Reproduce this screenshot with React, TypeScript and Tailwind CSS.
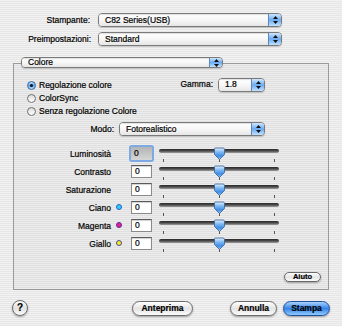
import React from "react";

const Arrows = () => (
  <svg width="5" height="8" viewBox="0 0 5 8">
    <path d="M2.5 0 L5 3 L0 3 Z M0 5 L5 5 L2.5 8 Z" fill="#111" />
  </svg>
);

function Popup({ className, text }: { className: string; text: string }) {
  return (
    <div
      className={`flex overflow-hidden rounded-[4px] border border-[#7a7a7a] shadow-[0_1px_1px_rgba(0,0,0,0.18)] ${className}`}
    >
      <div className="flex flex-1 items-center bg-linear-to-b from-[#ffffff] via-[#f7f7f7] to-[#e6e6e6] pl-[6px] shadow-[inset_0_1px_1px_rgba(0,0,0,0.12)]">
        {text}
      </div>
      <div className="flex w-[13px] items-center justify-center border-l border-[#5f87b8] bg-linear-to-b from-[#cfe7fd] via-[#6aaaf0] to-[#bfe2ff]">
        <Arrows />
      </div>
    </div>
  );
}

function Radio({ on }: { on?: boolean }) {
  if (on)
    return (
      <div className="flex h-[9px] w-[9px] items-center justify-center rounded-full border border-[#3a6a9e] bg-linear-to-b from-[#bfe0fd] via-[#5ea2ec] to-[#b8e0ff]">
        <div className="h-[3px] w-[3px] rounded-full bg-[#111]" />
      </div>
    );
  return (
    <div className="h-[9px] w-[9px] rounded-full border border-[#6e6e6e] bg-linear-to-b from-[#dcdcdc] to-[#ffffff] shadow-[0_1px_0_rgba(255,255,255,0.6)]" />
  );
}

function Slider() {
  return (
    <svg width="124" height="18" viewBox="0 0 124 18">
      <defs>
        <linearGradient id="trk" x1="0" y1="0" x2="0" y2="1">
          <stop offset="0" stopColor="#262626" />
          <stop offset="0.5" stopColor="#4e4e4e" />
          <stop offset="1" stopColor="#a0a0a0" />
        </linearGradient>
        <linearGradient id="thm" x1="0" y1="0" x2="0" y2="1">
          <stop offset="0" stopColor="#e4f2ff" />
          <stop offset="0.35" stopColor="#7db9f3" />
          <stop offset="0.7" stopColor="#3f8ae2" />
          <stop offset="1" stopColor="#9ad0ff" />
        </linearGradient>
      </defs>
      <rect x="0" y="4" width="120" height="4" rx="2" fill="url(#trk)" />
      <rect x="4" y="14" width="1" height="3" fill="#555" />
      <rect x="115" y="14" width="1" height="3" fill="#555" />
      <rect x="60" y="14" width="1" height="3" fill="#555" />
      <path
        d="M56 3 H64 Q65.5 3 65.5 4.5 V9.5 L60.5 14.5 L55.5 9.5 V4.5 Q55.5 3 56 3 Z"
        fill="url(#thm)"
        stroke="#34609a"
        strokeWidth="0.8"
      />
    </svg>
  );
}

function Dot({ color }: { color: string }) {
  return <div className={`h-[6px] w-[6px] rounded-full border ${color}`} />;
}

function SliderRow({
  label,
  dot,
  focused,
}: {
  label: string;
  dot?: string;
  focused?: boolean;
}) {
  return (
    <div className="flex h-[18px] items-start">
      <div className="mt-[5px] w-[97px] text-right">{label}</div>
      <div className="flex w-[20px] items-start pl-[5px] pt-[5px]">
        {dot && <Dot color={dot} />}
      </div>
      <div
        className={
          focused
            ? "mt-[2px] flex h-[13px] w-[21px] items-center rounded-[1px] bg-linear-to-b from-[#b4b4b4] to-[#d6d6d6] pl-[3px] shadow-[0_0_0_2px_#7eaae4]"
            : "mt-[2px] flex h-[13px] w-[21px] items-center border border-[#8a8a8a] border-t-[#5a5a5a] bg-white pl-[3px] shadow-[inset_0_1px_1px_rgba(0,0,0,0.18)]"
        }
      >
        0
      </div>
      <div className="ml-[7px]">
        <Slider />
      </div>
    </div>
  );
}

function Button({
  children,
  className,
  primary,
}: {
  children: React.ReactNode;
  className: string;
  primary?: boolean;
}) {
  return (
    <div
      className={
        (primary
          ? "border-[#1d4f9c] bg-linear-to-b from-[#a8d2fb] via-[#3583e6] to-[#8fcbff] "
          : "border-[#6a6a6a] bg-linear-to-b from-[#ffffff] via-[#e4e4e4] to-[#fbfbfb] ") +
        "flex items-center justify-center rounded-full border font-bold shadow-[0_1px_2px_rgba(0,0,0,0.35)] " +
        className
      }
    >
      {children}
    </div>
  );
}

export default function App() {
  return (
    <div className="flex h-[326px] w-[342px] flex-col overflow-hidden bg-[repeating-linear-gradient(180deg,#f2f2f2_0px,#f2f2f2_1px,#e6e6e6_1px,#e6e6e6_2px)] pt-[13px] font-['Liberation_Sans',Arial,sans-serif] text-[8.5px] leading-none text-black [-webkit-text-stroke:0.2px_#000]">
      <div className="flex h-[14px] items-center">
        <div className="w-[90px] text-right">Stampante:</div>
        <Popup className="ml-[8px] h-[14px] w-[184px]" text="C82 Series(USB)" />
      </div>
      <div className="mt-[5px] flex h-[14px] items-center">
        <div className="w-[91px] text-right">Preimpostazioni:</div>
        <Popup className="ml-[7px] h-[14px] w-[184px]" text="Standard" />
      </div>
      <Popup
        className="relative z-10 ml-[21px] mt-[11px] h-[11px] w-[202px]"
        text="Colore"
      />
      <div className="mx-[13px] -mt-[5px] flex h-[227px] flex-col border border-[#9a9a9a] bg-black/[0.025] pb-[7px] pt-[15px]">
        <div className="flex h-[13px] items-center">
          <div className="ml-[13px] flex items-center gap-[3px]">
            <Radio on />
            <span>Regolazione colore</span>
          </div>
          <div className="ml-auto mr-[63px] -mt-[2px] flex items-center">
            <span>Gamma:</span>
            <Popup className="ml-[5px] h-[14px] w-[47px]" text="1.8" />
          </div>
        </div>
        <div className="flex h-[13px] items-center">
          <div className="ml-[13px] flex items-center gap-[3px]">
            <Radio />
            <span>ColorSync</span>
          </div>
        </div>
        <div className="flex h-[13px] items-center">
          <div className="ml-[13px] flex items-center gap-[3px]">
            <Radio />
            <span>Senza regolazione Colore</span>
          </div>
        </div>
        <div className="mt-[4px] flex h-[14px] items-center justify-end pr-[63px]">
          <span>Modo:</span>
          <Popup className="ml-[5px] h-[14px] w-[146px]" text="Fotorealistico" />
        </div>
        <div className="mt-[9px] flex flex-col">
          <SliderRow label="Luminosità" focused />
          <SliderRow label="Contrasto" />
          <SliderRow label="Saturazione" />
          <SliderRow label="Ciano" dot="border-[#2a5fc8] bg-[#2ad0fa]" />
          <SliderRow label="Magenta" dot="border-[#5a2a9a] bg-[#ec1e90]" />
          <SliderRow label="Giallo" dot="border-[#4a4aa0] bg-[#f6ee18]" />
        </div>
        <div className="mt-auto flex justify-end pr-[7px]">
          <Button className="h-[10px] w-[37px] text-[7.5px]">Aiuto</Button>
        </div>
      </div>
      <div className="mt-[10px] flex h-[16px] items-center">
        <div className="ml-[12px] flex h-[16px] w-[16px] items-center justify-center rounded-full border border-[#6a6a6a] bg-linear-to-b from-[#ffffff] via-[#e2e2e2] to-[#fafafa] text-[10px] font-bold shadow-[0_1px_2px_rgba(0,0,0,0.35)]">
          ?
        </div>
        <Button className="ml-[104px] h-[15px] w-[61px] text-[8.5px]">Anteprima</Button>
        <Button className="ml-[37px] h-[15px] w-[47px] text-[8.5px]">Annulla</Button>
        <Button primary className="ml-[6px] h-[15px] w-[47px] text-[8.5px]">
          Stampa
        </Button>
      </div>
    </div>
  );
}
